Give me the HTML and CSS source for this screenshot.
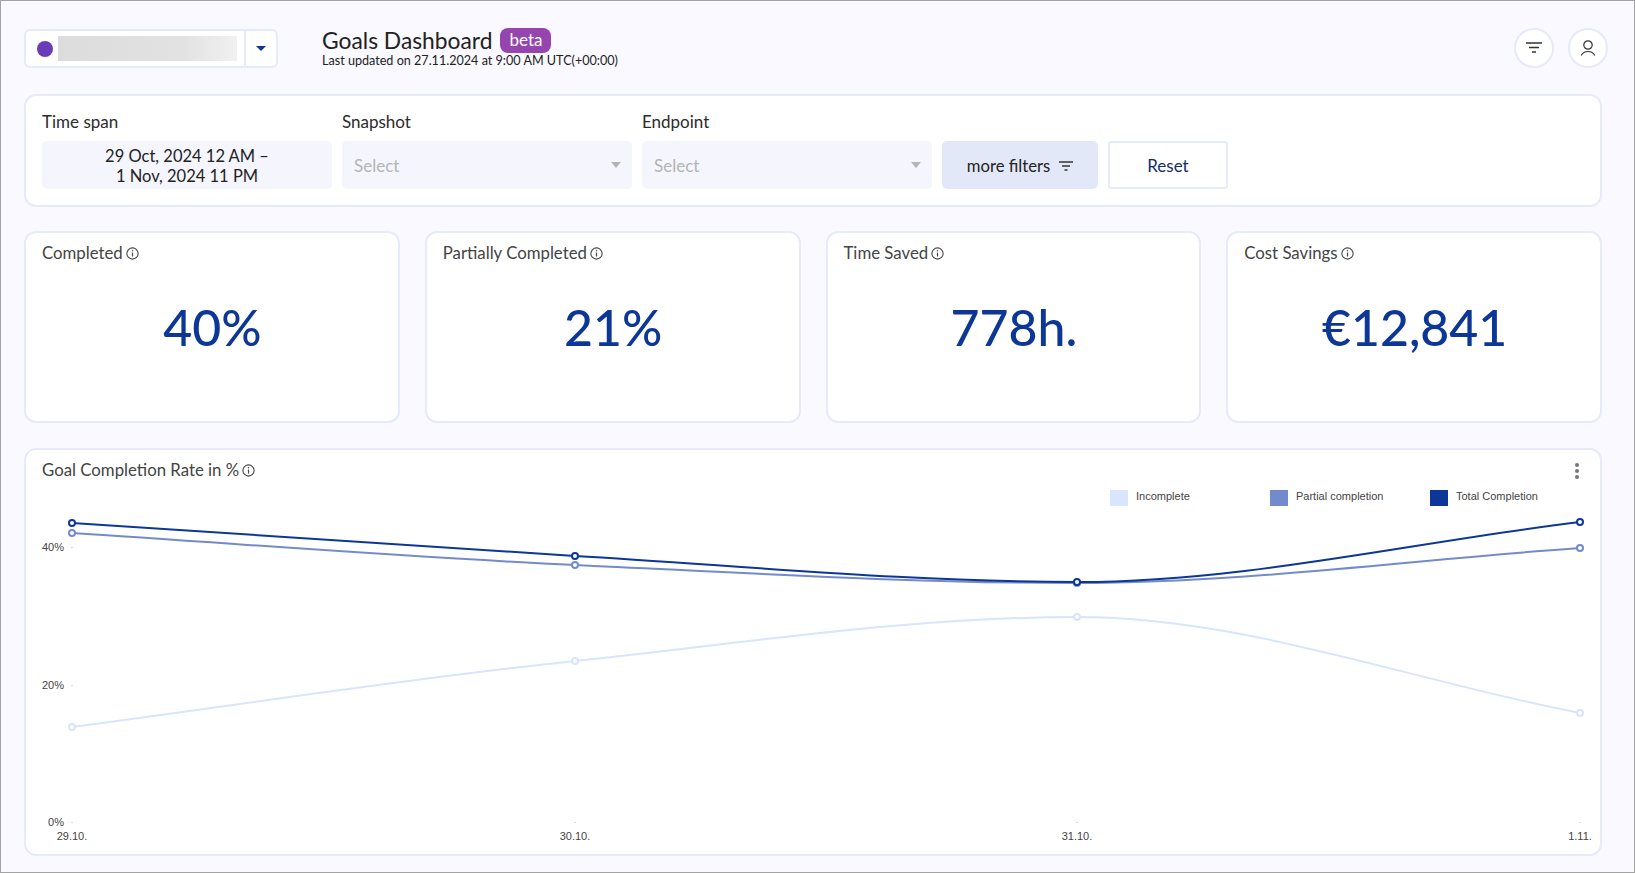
FILE: index.html
```html
<!DOCTYPE html>
<html>
<head>
  <meta charset="UTF-8">
  <title>Goals Dashboard</title>
  <link rel="stylesheet" href="styles.css">
</head>
<body>
  <div class="page">
    <header class="top-bar">
      <div class="account-select">
        <span class="account-dot"></span>
        <span class="account-name"></span>
        <span class="account-caret"><span class="caret-blue"></span></span>
      </div>
      <div class="title-block">
        <div class="title-row">
          <h1>Goals Dashboard</h1>
          <span class="badge">beta</span>
        </div>
        <div class="updated">Last updated on 27.11.2024 at 9:00 AM UTC(+00:00)</div>
      </div>
      <div class="top-actions">
        <button class="round-btn" type="button">
          <svg width="16" height="12" viewBox="0 0 16 12"><path d="M0 1h16M3 5.5h10M6 10h4" stroke="#333" stroke-width="1.6" fill="none"/></svg>
        </button>
        <button class="round-btn" type="button">
          <svg width="16" height="17" viewBox="0 0 16 17"><circle cx="8" cy="5" r="4.2" stroke="#333" stroke-width="1.2" fill="none"/><path d="M1.2 15.5c1.5-3 3.8-4 6.8-4s5.300 1 6.800 4" stroke="#333" stroke-width="1.2" fill="none"/></svg>
        </button>
      </div>
    </header>

    <section class="card filters">
      <div class="field">
        <label>Time span</label>
        <div class="control date-range">29 Oct, 2024 12 AM –<br>1 Nov, 2024 11 PM</div>
      </div>
      <div class="field">
        <label>Snapshot</label>
        <div class="control select"><span>Select</span><span class="caret-gray"></span></div>
      </div>
      <div class="field">
        <label>Endpoint</label>
        <div class="control select"><span>Select</span><span class="caret-gray"></span></div>
      </div>
      <button class="more-btn" type="button">more filters
        <svg width="14" height="10" viewBox="0 0 14 10"><path d="M0 1h14M3 5h8M5.500 9h3" stroke="#333" stroke-width="1.500" fill="none"/></svg>
      </button>
      <button class="reset-btn" type="button">Reset</button>
    </section>

    <section class="kpis">
      <div class="card kpi">
        <div class="card-title">Completed<svg class="info" viewBox="0 0 12 12"><use href="#info-icon"/></svg></div>
        <div class="kpi-value">40%</div>
      </div>
      <div class="card kpi">
        <div class="card-title">Partially Completed<svg class="info" viewBox="0 0 12 12"><use href="#info-icon"/></svg></div>
        <div class="kpi-value">21%</div>
      </div>
      <div class="card kpi">
        <div class="card-title">Time Saved<svg class="info" viewBox="0 0 12 12"><use href="#info-icon"/></svg></div>
        <div class="kpi-value">778h.</div>
      </div>
      <div class="card kpi">
        <div class="card-title">Cost Savings<svg class="info" viewBox="0 0 12 12"><use href="#info-icon"/></svg></div>
        <div class="kpi-value">€12,841</div>
      </div>
    </section>

    <section class="card chart-card">
      <div class="chart-head">
        <div class="card-title">Goal Completion Rate in %<svg class="info" viewBox="0 0 12 12"><use href="#info-icon"/></svg></div>
        <span class="kebab"><i></i><i></i><i></i></span>
      </div>
      <!-- viewBox uses page coordinates so the points read straight off the screen -->
      <svg class="chart" viewBox="26 486 1574 368">
        <rect x="1110" y="490" width="18" height="16" fill="#d9e5fd"/>
        <text class="legend" x="1136" y="500">Incomplete</text>
        <rect x="1270" y="490" width="18" height="16" fill="#738bcb"/>
        <text class="legend" x="1296" y="500">Partial completion</text>
        <rect x="1430" y="490" width="18" height="16" fill="#0c3796"/>
        <text class="legend" x="1456" y="500">Total Completion</text>

        <text class="axis" x="64" y="551" text-anchor="end">40%</text>
        <text class="axis" x="64" y="689" text-anchor="end">20%</text>
        <text class="axis" x="64" y="826" text-anchor="end">0%</text>
        <text class="axis" x="72" y="840" text-anchor="middle">29.10.</text>
        <text class="axis" x="575" y="840" text-anchor="middle">30.10.</text>
        <text class="axis" x="1077" y="840" text-anchor="middle">31.10.</text>
        <text class="axis" x="1580" y="840" text-anchor="middle">1.11.</text>

        <g fill="#bbb">
          <rect x="71.500" y="547" width="1" height="1"/>
          <rect x="71.500" y="685" width="1" height="1"/>
          <rect x="71.500" y="822" width="1" height="1"/>
          <rect x="574.500" y="822" width="1" height="1"/>
          <rect x="1076.500" y="822" width="1" height="1"/>
          <rect x="1579.500" y="822" width="1" height="1"/>
        </g>

        <path class="line" stroke="#d9e5fd" d="M72 727C239.700 705 407.300 678.600 575 661C742.300 643.400 909.700 617 1077 617C1244.700 617 1412.300 681 1580 713"/>
        <g class="dots" stroke="#d9e5fd">
          <circle cx="72" cy="727" r="3"/><circle cx="575" cy="661" r="3"/><circle cx="1077" cy="617" r="3"/><circle cx="1580" cy="713" r="3"/>
        </g>
        <path class="line" stroke="#738bcb" d="M72 533C239.700 543.700 407.300 557.300 575 565C742.300 572.700 909.700 583 1077 583C1244.700 583 1412.300 559.700 1580 548"/>
        <g class="dots" stroke="#738bcb">
          <circle cx="72" cy="533" r="3"/><circle cx="575" cy="565" r="3"/><circle cx="1077" cy="583" r="3"/><circle cx="1580" cy="548" r="3"/>
        </g>
        <path class="line" stroke="#0c3796" d="M72 523C239.700 533.800 407.300 546.100 575 556C742.300 565.800 909.700 582 1077 582C1244.700 582 1412.300 542 1580 522"/>
        <g class="dots" stroke="#0c3796">
          <circle cx="72" cy="523" r="3"/><circle cx="575" cy="556" r="3"/><circle cx="1077" cy="582" r="3"/><circle cx="1580" cy="522" r="3"/>
        </g>
      </svg>
    </section>
  </div>

  <svg class="sprite" width="0" height="0">
    <symbol id="info-icon" viewBox="0 0 12 12">
      <circle cx="6" cy="6" r="5.200" fill="none" stroke="#444" stroke-width="1"/>
      <path d="M6 5.200v3.600" stroke="#444" stroke-width="1.100"/>
      <circle cx="6" cy="3.500" r=".7" fill="#444"/>
    </symbol>
  </svg>
</body>
</html>
```

FILE: styles.css
```css
* {
  box-sizing: border-box;
}
body {
  margin: 0;
  background: #f9f9ff;
  font-family: "Lato", "Open Sans", sans-serif;
  color: #222;
}
.page {
  height: 873px;
  border: 1px solid #a3a3a3;
  padding: 27px 32px 0 23px;
  overflow: hidden;
}
.sprite {
  position: absolute;
}
.card {
  background: #fff;
  border: 2px solid #e6eafa;
  border-radius: 12px;
}

/* top bar */
.top-bar {
  display: flex;
  align-items: flex-start;
  height: 66px;
  margin-right: -6px;
}
.account-select {
  display: flex;
  align-items: center;
  width: 254px;
  height: 39px;
  margin-top: 1px;
  background: #fff;
  border: 2px solid #e6eafa;
  border-radius: 6px;
}
.account-dot {
  width: 16px;
  height: 16px;
  margin-left: 11px;
  border-radius: 50%;
  background: #6b3cba;
}
.account-name {
  width: 179px;
  height: 25px;
  margin-left: 5px;
  background: linear-gradient(90deg, #dcdcdc, #e2e2e2 70%, #f1f1f1);
}
.account-caret {
  display: flex;
  align-items: center;
  justify-content: center;
  flex: 1;
  height: 100%;
  margin-left: 7px;
  border-left: 2px solid #e6eafa;
}
.caret-blue {
  border-left: 5px solid transparent;
  border-right: 5px solid transparent;
  border-top: 5px solid #0c3796;
}
.title-block {
  margin-left: 44px;
}
.title-row {
  display: flex;
  align-items: center;
  height: 25px;
}
h1 {
  margin: 0 0 2px;
  font-size: 22.800px;
  font-weight: 400;
  color: #222;
}
.badge {
  margin-left: 8px;
  padding: 0 9px;
  height: 25px;
  line-height: 24px;
  border-radius: 8px;
  background: #9645ae;
  color: #fff;
  font-size: 17px;
}
.updated {
  font-size: 12.600px;
  line-height: 15px;
}
.top-actions {
  display: flex;
  gap: 14px;
  margin-left: auto;
}
.round-btn {
  display: flex;
  align-items: center;
  justify-content: center;
  width: 40px;
  height: 40px;
  padding: 0;
  background: #fff;
  border: 2px solid #e6eafa;
  border-radius: 50%;
}

/* filter row */
.filters {
  display: flex;
  align-items: flex-end;
  gap: 10px;
  height: 113px;
  padding: 16px;
}
.field {
  width: 290px;
}
.field label {
  display: block;
  height: 31px;
  line-height: 24px;
  font-size: 17px;
  color: #2b2b2b;
}
.control {
  height: 48px;
  background: #f4f5fd;
  border-radius: 5px;
  font-size: 16.500px;
}
.date-range {
  padding-top: 5px;
  text-align: center;
  line-height: 20px;
}
.select {
  display: flex;
  align-items: center;
  justify-content: space-between;
  padding: 0 11px 0 12px;
  font-size: 17px;
  color: #b4b4b4;
}
.caret-gray {
  border-left: 5px solid transparent;
  border-right: 5px solid transparent;
  border-top: 6px solid #b4b4b4;
}
.more-btn {
  display: flex;
  align-items: center;
  justify-content: center;
  gap: 9px;
  width: 156px;
  height: 48px;
  padding-top: 2px;
  background: #e2e8f8;
  border: 0;
  border-radius: 5px;
  font: inherit;
  font-size: 16.700px;
  color: #222;
}
.reset-btn {
  width: 120px;
  height: 48px;
  background: #fff;
  border: 2px solid #e6eafa;
  border-radius: 3px;
  font: inherit;
  font-size: 17px;
  color: #142c6e;
}

/* kpi cards */
.kpis {
  display: grid;
  grid-template-columns: repeat(4, 1fr);
  gap: 25px;
  margin-top: 24px;
}
.kpi {
  height: 192px;
  padding: 10px 16px;
}
.card-title {
  font-size: 16.800px;
  line-height: 20px;
  color: #444;
}
.info {
  width: 13px;
  height: 13px;
  margin-left: 3px;
  vertical-align: -1px;
}
.kpi-value {
  margin-top: 34px;
  padding-left: 1px;
  text-align: center;
  font-size: 50px;
  line-height: 60px;
  font-weight: 500;
  color: #0c3796;
}

/* chart */
.chart-card {
  height: 408px;
  margin-top: 25px;
}
.chart-head {
  display: flex;
  justify-content: space-between;
  height: 36px;
  padding: 10px 21px 0 16px;
}
.kebab {
  display: flex;
  flex-direction: column;
  gap: 2px;
  margin-top: 3px;
}
.kebab i {
  width: 4px;
  height: 4px;
  border-radius: 50%;
  background: #777;
}
.chart {
  display: block;
  width: 1574px;
  height: 368px;
}
.legend,
.axis {
  font-family: "Liberation Sans", Arial, sans-serif;
  font-size: 11px;
  fill: #444;
}
.line {
  fill: none;
  stroke-width: 2;
}
.dots circle {
  fill: #fff;
  stroke-width: 2;
}
```
